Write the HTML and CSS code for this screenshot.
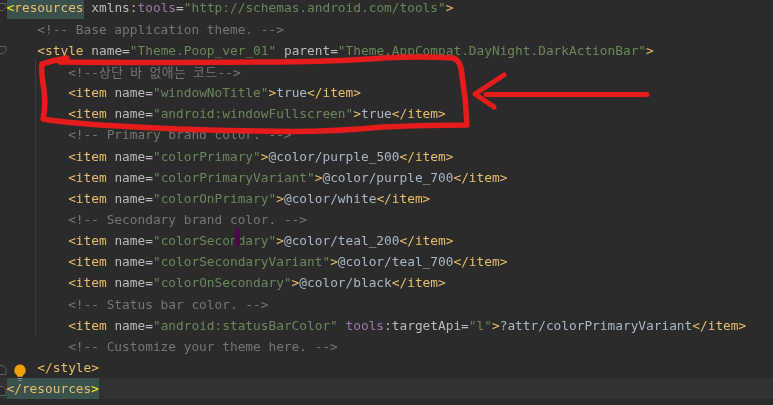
FILE: index.html
```html
<!DOCTYPE html>
<html lang="en">
<head>
<meta charset="utf-8">
<title>themes.xml</title>
<link rel="stylesheet" href="styles.css">
</head>
<body>
<main class="editor">
<div class="line"><span class="match"><span class="br">&lt;</span><span class="t">resources</span></span> <span class="a">xmlns:</span><span class="ns">tools</span><span class="a">=</span><span class="v">"http://schemas.android.com/tools"</span><span class="t">&gt;</span></div>
<div class="line">    <span class="c">&lt;!-- Base application theme. --&gt;</span></div>
<div class="line">    <span class="t">&lt;style</span> <span class="a">name=</span><span class="v">"Theme.Poop_ver_01"</span> <span class="a">parent=</span><span class="v">"Theme.AppCompat.DayNight.DarkActionBar"</span><span class="t">&gt;</span></div>
<div class="line">        <span class="c">&lt;!--<span class="ko">상단 바 없애는 코드</span>--&gt;</span></div>
<div class="line">        <span class="t">&lt;item</span> <span class="a">name=</span><span class="v">"windowNoTitle"</span><span class="t">&gt;</span><span class="x">true</span><span class="t">&lt;/item&gt;</span></div>
<div class="line">        <span class="t">&lt;item</span> <span class="a">name=</span><span class="v">"android:windowFullscreen"</span><span class="t">&gt;</span><span class="x">true</span><span class="t">&lt;/item&gt;</span></div>
<div class="line">        <span class="c">&lt;!-- Primary brand color. --&gt;</span></div>
<div class="line">        <span class="t">&lt;item</span> <span class="a">name=</span><span class="v">"colorPrimary"</span><span class="t">&gt;</span><span class="x">@color/purple_500</span><span class="t">&lt;/item&gt;</span></div>
<div class="line">        <span class="t">&lt;item</span> <span class="a">name=</span><span class="v">"colorPrimaryVariant"</span><span class="t">&gt;</span><span class="x">@color/purple_700</span><span class="t">&lt;/item&gt;</span></div>
<div class="line">        <span class="t">&lt;item</span> <span class="a">name=</span><span class="v">"colorOnPrimary"</span><span class="t">&gt;</span><span class="x">@color/white</span><span class="t">&lt;/item&gt;</span></div>
<div class="line">        <span class="c">&lt;!-- Secondary brand color. --&gt;</span></div>
<div class="line">        <span class="t">&lt;item</span> <span class="a">name=</span><span class="v">"colorSecondary"</span><span class="t">&gt;</span><span class="x">@color/teal_200</span><span class="t">&lt;/item&gt;</span></div>
<div class="line">        <span class="t">&lt;item</span> <span class="a">name=</span><span class="v">"colorSecondaryVariant"</span><span class="t">&gt;</span><span class="x">@color/teal_700</span><span class="t">&lt;/item&gt;</span></div>
<div class="line">        <span class="t">&lt;item</span> <span class="a">name=</span><span class="v">"colorOnSecondary"</span><span class="t">&gt;</span><span class="x">@color/black</span><span class="t">&lt;/item&gt;</span></div>
<div class="line">        <span class="c">&lt;!-- Status bar color. --&gt;</span></div>
<div class="line">        <span class="t">&lt;item</span> <span class="a">name=</span><span class="v">"android:statusBarColor"</span> <span class="ns">tools</span><span class="a">:targetApi=</span><span class="v">"l"</span><span class="t">&gt;</span><span class="x">?attr/colorPrimaryVariant</span><span class="t">&lt;/item&gt;</span></div>
<div class="line">        <span class="c">&lt;!-- Customize your theme here. --&gt;</span></div>
<div class="line">    <span class="t">&lt;/style&gt;</span></div>
<div class="line current"><span class="match"><span class="t">&lt;/resources</span><span class="br">&gt;</span></span></div>

<div class="guide"></div>
<div class="caret"></div>

<svg class="overlay" viewBox="0 0 773 405" width="773" height="405" aria-hidden="true">
  <g fill="#2b2b2b" stroke="#5f5f5f" stroke-width="1">
    <path d="M-1 3.500h7v4l-3 3h-4z"/>
    <path d="M-1 46.500h7v4l-3 3h-4z"/>
    <path d="M-1 374.500h7v-6l-3-3h-4z"/>
    <path d="M-1 395.500h7v-6l-3-3h-4z"/>
  </g>
  <path d="M20 364.500a5.800 5.800 0 0 0-3.500 10.300c.6.600.9 1.200 1 2h5c.1-.8.400-1.400 1-2a5.800 5.800 0 0 0-3.500-10.300z" fill="#eda200"/>
  <path d="M17.800 378.500h4.400M18.300 380.500h3.400" stroke="#8a8a8a" stroke-width="1.200" fill="none"/>
  <g fill="none" stroke="#e61c1c" stroke-linecap="round" stroke-linejoin="round">
    <path stroke-width="5.500" d="M67 58 Q54 60 42 64 Q41 72 44 90 Q46 106 43 119 Q60 122 100 125 Q180 130 260 131 Q320 133 383 127 Q430 125 467 125 Q466 100 462 75 Q461 60 453 58 Q420 56 383 58 Q330 62 260 62 Q150 63 60 62"/>
    <path stroke-width="5" d="M647 94.500H486"/>
    <path stroke-width="5" d="M504 75 L475 94 L494 107"/>
  </g>
</svg>
</main>
</body>
</html>
```

FILE: styles.css
```css
html, body {
  margin: 0;
  height: 100%;
  background: #2b2b2b;
}

.editor {
  position: relative;
  width: 773px;
  height: 405px;
  overflow: hidden;
  background: #2b2b2b;
}

.line {
  height: 21.17px;
  line-height: 21.17px;
  padding-left: 6.500px;
  white-space: pre;
  font-family: "DejaVu Sans Mono", "Noto Sans CJK KR", monospace;
  font-size: 12.8px;
  position: relative;
  top: -2.600px;
  color: #a9b7c6;
  filter: blur(0.35px);
}

.current {
  background: #323232;
}

.match {
  display: inline-block;
  height: 21.17px;
  background: #3b514d;
}

.t { color: #e8bf6a; }
.a { color: #bababa; }
.ns { color: #9876aa; }
.v { color: #6a8759; }
.c { color: #757575; }
.x { color: #a9b7c6; }
.br { color: #ffef28; }
.ko {
  font-family: "Noto Sans CJK KR", sans-serif;
  letter-spacing: 0.45px;
  word-spacing: 3.6px;
}

.guide {
  position: absolute;
  left: 35px;
  top: 60px;
  width: 1px;
  height: 276px;
  background: #3c3c3c;
}

.caret {
  position: absolute;
  left: 235px;
  top: 228px;
  width: 5px;
  height: 18px;
  background: #4a0a4a;
}

.overlay {
  position: absolute;
  left: 0;
  top: 0;
}
```
